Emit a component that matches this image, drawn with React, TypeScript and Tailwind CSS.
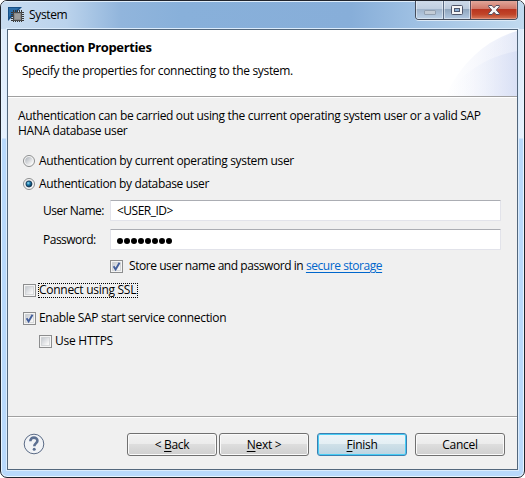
import React from "react";

function Radio({ on = false }: { on?: boolean }) {
  return (
    <svg width="12" height="12" viewBox="0 0 12 12" className="block shrink-0">
      <defs>
        <linearGradient id="rg" x1="0" y1="0" x2="1" y2="1">
          <stop offset="0.15" stopColor="#b9bec4" />
          <stop offset="0.85" stopColor="#f6f6f6" />
        </linearGradient>
        <radialGradient id="dot" cx="0.38" cy="0.35" r="0.6">
          <stop offset="0" stopColor="#a5e2f5" />
          <stop offset="0.45" stopColor="#1f83b4" />
          <stop offset="1" stopColor="#0c3554" />
        </radialGradient>
      </defs>
      <circle cx="6" cy="6" r="5.5" fill="#f7f7f7" stroke="#8b8d8e" />
      <circle cx="6" cy="6" r="3.9" fill="url(#rg)" />
      {on && <circle cx="6" cy="6" r="3" fill="url(#dot)" stroke="#173a58" strokeWidth="0.8" />}
    </svg>
  );
}

function Check({ on = false }: { on?: boolean }) {
  return (
    <svg width="13" height="13" viewBox="0 0 13 13" className="block shrink-0">
      <defs>
        <linearGradient id="cg" x1="0" y1="0" x2="1" y2="1">
          <stop offset="0.1" stopColor="#c9cdd3" />
          <stop offset="0.8" stopColor="#f6f6f6" />
        </linearGradient>
      </defs>
      <rect x="0.5" y="0.5" width="12" height="12" fill="#f4f4f4" stroke="#8c8d8e" />
      <rect x="2.5" y="2.5" width="8" height="8" fill="url(#cg)" stroke="#c3c6ca" strokeOpacity="0.6" />
      {on && <path d="M3.6 6.3 5.6 9.4 9.5 2.8" fill="none" stroke="#435e9b" strokeWidth="1.9" />}
    </svg>
  );
}

function AppIcon() {
  return (
    <svg width="16" height="16" viewBox="0 0 16 16" className="block shrink-0">
      <path d="M0 0H14L0 14Z" fill="#164f87" />
      <path d="M1 1H11L1 10Z" fill="#2c6da8" />
      <path
        d="M5.5 3V15M7.5 3V15M9.5 3V15M11.5 3V15M13.5 3V15M3 5.5H16M3 7.5H16M3 9.5H16M3 11.5H16M3 13.5H16"
        stroke="#383838"
        strokeWidth="1"
      />
      <rect x="5.5" y="5.5" width="8" height="8" fill="#8a8a8a" stroke="#4a4a4a" />
      <rect x="7" y="7" width="5" height="5" fill="#9c9c9c" />
    </svg>
  );
}

function CaptionButtons() {
  return (
    <div className="-mt-px flex h-[20px] w-[103px] overflow-hidden rounded-b-[4px] border border-t-0 border-[#454d5c] shadow-[0_1px_0_#dce9f6]">
      <div className="flex w-[28px] justify-center border-r border-[#5b6b83] bg-[linear-gradient(#d0dceb_0%,#c0cfe1_45%,#a0b4cb_50%,#bdd2e8_100%)] pt-[10px] shadow-[inset_0_0_0_1px_rgba(255,255,255,0.45)]">
        <div className="h-[5px] w-[12px] rounded-[1px] border border-[#93a0b0] bg-[#c3ccd6]" />
      </div>
      <div className="flex w-[27px] justify-center border-r border-[#5b4b5b] bg-[linear-gradient(#d0dceb_0%,#bccbdd_45%,#90a6be_50%,#b3c9e2_100%)] pt-[5px] shadow-[inset_0_0_0_1px_rgba(255,255,255,0.45)]">
        <svg width="12" height="10" viewBox="0 0 12 10">
          <rect x="0.5" y="0.5" width="11" height="9" rx="1" fill="#f5f5f6" stroke="#50566b" />
          <rect x="3.5" y="3.5" width="5" height="3" fill="#8db0d6" stroke="#50566b" />
        </svg>
      </div>
      <div className="flex flex-1 justify-center bg-[linear-gradient(#e3aca0_0%,#d1796a_45%,#b93520_50%,#c04428_75%,#d5795c_100%)] pt-[5px] shadow-[inset_0_0_0_1px_rgba(255,200,190,0.4)]">
        <svg width="12" height="10" viewBox="0 0 12 10">
          <path
            d="M.7.5H4L6 2.8 8 .5H11.3V1.7L8.3 5 11.3 8.3V9.5H8L6 7.2 4 9.5H.7V8.3L3.7 5 .7 1.7Z"
            fill="#f6f6f6"
            stroke="#514c5e"
          />
        </svg>
      </div>
    </div>
  );
}

function Button({
  before = "",
  accel = "",
  rest,
  primary = false,
}: {
  before?: string;
  accel?: string;
  rest: string;
  primary?: boolean;
}) {
  return (
    <button
      className={
        "flex h-[23px] w-[90px] shrink-0 items-center justify-center rounded-[3px] border pt-px " +
        (primary
          ? "border-[#3c7fb1] bg-[linear-gradient(#edf4f8_0%,#e4eff4_48%,#cfe0e8_50%,#bcd4e2_100%)] shadow-[inset_0_0_0_1px_#48cdf5]"
          : "border-[#707070] bg-[linear-gradient(#f2f2f2_0%,#ebebeb_48%,#dddddd_50%,#cfcfcf_100%)] shadow-[inset_0_0_0_1px_#fafafa]")
      }
    >
      <span className="whitespace-pre tracking-[-0.3px]">
        {before}
        <span className="underline decoration-1 underline-offset-2">{accel}</span>
        {rest}
      </span>
    </button>
  );
}

function Header() {
  return (
    <header className="relative h-[66px] shrink-0 bg-white pl-[6px]">
      <svg width="72" height="66" viewBox="0 0 72 66" className="absolute right-0 top-0">
        <defs>
          <linearGradient id="w1">
            <stop offset="0" stopColor="#fff" />
            <stop offset="0.4" stopColor="#f8f9fd" />
            <stop offset="1" stopColor="#e8ecf9" />
          </linearGradient>
          <linearGradient id="w2">
            <stop offset="0" stopColor="#fff" stopOpacity="0" />
            <stop offset="1" stopColor="#d9e0f5" />
          </linearGradient>
        </defs>
        <path d="M0 66Q26 14 72 1V66Z" fill="url(#w1)" />
        <path d="M24 66Q36 12 72 1V66Z" fill="url(#w2)" opacity="0.3" />
        <path d="M0 66Q28 29 72 21V66Z" fill="url(#w2)" />
      </svg>
      <h1 className="relative pt-[9px] text-[13px] font-bold leading-[17px] tracking-[-0.36px]">Connection Properties</h1>
      <p className="relative pl-2 pt-[7px] leading-[16px] tracking-[-0.33px]">
        Specify the properties for connecting to the system.
      </p>
    </header>
  );
}

const field =
  "h-[21px] w-[391px] rounded-[1px] border border-[#e2e3ea] border-t-[#abadb3] bg-white pl-[6px]";

export default function App() {
  return (
    <div className="h-[478px] w-[525px] bg-white font-['Open_Sans','Noto_Sans',sans-serif] text-[12px] text-black">
      <div className="flex h-full flex-col overflow-hidden rounded-[7px] border border-[#20242d] bg-[linear-gradient(#dceafa_0px,#e6f1fd_137px,#b9d9fb_138px)] px-[6px] pb-[7px] shadow-[inset_0_0_0_1px_#e8f5ff]">
        <div className="-mx-[6px] flex h-[28px] shrink-0 bg-[linear-gradient(90deg,#c9dcf0_0px,#bbd3ec_65px,#91b5dc_120px,#88b0da_180px,#87aed9_350px,#9dbfe2_410px,#c1daef_523px)] pl-[7px] pr-[6px] shadow-[inset_0_1px_0_#dfedfa]">
          <div className="flex flex-1 items-start pt-[6px]">
            <AppIcon />
            <span className="pl-[5px] leading-[16px] tracking-[-0.35px]">System</span>
          </div>
          <CaptionButtons />
        </div>
        <div className="flex min-h-0 flex-1 flex-col border border-[#53677c] bg-[#f0f0f0] shadow-[0_0_0_1px_#dcecfc]">
          <Header />
          <main className="flex h-[321px] shrink-0 flex-col border-y border-[#a0a0a0] pl-[10px] shadow-[inset_0_1px_0_#fff,0_1px_0_#fff]">
            <p className="whitespace-nowrap pt-[11px] leading-[15px] tracking-[-0.336px]">
              Authentication can be carried out using the current operating system user or a valid SAP
              <br />
              HANA database user
            </p>
            <div className="flex flex-col pl-[5px]">
              <label className="mt-[15px] flex h-[16px] items-center gap-[4px]">
                <Radio />
                <span className="tracking-[-0.34px]">Authentication by current operating system user</span>
              </label>
              <label className="mt-[7px] flex h-[16px] items-center gap-[4px]">
                <Radio on />
                <span className="tracking-[-0.36px]">Authentication by database user</span>
              </label>
              <div className="mt-[8px] flex h-[21px] items-center">
                <span className="w-[87px] pl-[20px] tracking-[-0.5px]">User Name:</span>
                <div className={field}>
                  <span className="block leading-[19px] tracking-[-0.5px]">&lt;USER_ID&gt;</span>
                </div>
              </div>
              <div className="mt-[8px] flex h-[21px] items-center">
                <span className="w-[87px] pl-[20px] tracking-[-0.5px]">Password:</span>
                <div className={field}>
                  <span className="flex h-full items-center gap-px pt-[2px]">
                    {Array.from({ length: 8 }, (_, i) => (
                      <i key={i} className="block size-[6px] rounded-full bg-black" />
                    ))}
                  </span>
                </div>
              </div>
              <label className="mt-[8px] flex h-[16px] items-center gap-[6px] pl-[87px]">
                <Check on />
                <span className="tracking-[-0.44px]">
                  Store user name and password in{" "}
                  <a className="text-[#0066cc] underline underline-offset-2">secure storage</a>
                </span>
              </label>
              <label className="mt-[8px] flex h-[16px] items-center gap-[2px]">
                <Check />
                <span className="flex h-[15px] w-[100px] items-center whitespace-nowrap border border-dotted border-black tracking-[-0.28px]">
                  Connect using SSL
                </span>
              </label>
              <label className="mt-[12px] flex h-[16px] items-center gap-[3px]">
                <Check on />
                <span className="tracking-[-0.32px]">Enable SAP start service connection</span>
              </label>
              <label className="mt-[7px] flex h-[16px] items-center gap-[3px] pl-[16px]">
                <Check />
                <span className="tracking-[-0.25px]">Use HTTPS</span>
              </label>
            </div>
          </main>
          <footer className="flex pl-[15px] pt-[16px]">
            <svg width="22" height="22" viewBox="0 0 22 22" className="mr-[82px] shrink-0">
              <circle cx="11" cy="11" r="9.8" fill="#f1f3f6" stroke="#5b6b86" strokeWidth="1" />
              <path d="M7.4 8.2C7.2 3.3 14.6 3.6 14.4 7.8 14.2 10.5 11.3 10.4 11.3 13.3" fill="none" stroke="#5c7092" strokeWidth="2.6" />
              <circle cx="11.2" cy="16.3" r="1.5" fill="#5c7092" />
            </svg>
            <div className="flex gap-[2px]">
              <Button before="< " accel="B" rest="ack" />
              <Button accel="N" rest="ext >" />
            </div>
            <div className="flex gap-[8px] pl-[8px]">
              <Button accel="F" rest="inish" primary />
              <Button rest="Cancel" />
            </div>
          </footer>
        </div>
      </div>
    </div>
  );
}
